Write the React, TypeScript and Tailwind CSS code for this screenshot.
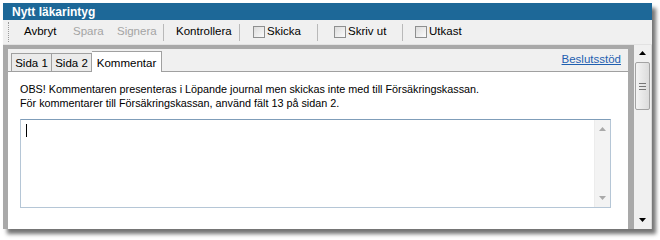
import React from "react";

// small helpers for the XP-ish chrome
function Check() {
  return (
    <span className="w-[12px] h-[12px] border border-[#8e8f8f] bg-gradient-to-br from-[#dcdcdc] to-[#fbfbfb] shrink-0" />
  );
}

function Sep() {
  return <span className="w-px h-[17px] bg-[#b9b9b9] shrink-0" />;
}

function Arrow({ up, color = "#000" }: { up?: boolean; color?: string }) {
  return (
    <svg width="7" height="4" viewBox="0 0 7 4">
      <path d={up ? "M0 4 L3.5 0 L7 4 Z" : "M0 0 L3.5 4 L7 0 Z"} fill={color} />
    </svg>
  );
}

export default function App() {
  return (
    <div className="w-[660px] h-[239px] bg-white font-['Liberation_Sans',Arial,sans-serif] text-black overflow-hidden">
      <div className="ml-[3px] mt-[3px] w-[649px] h-[226px] flex flex-col bg-[#f0f0f0] shadow-[4px_5px_4px_rgba(0,0,0,0.55)]">
        {/* --- title bar --- */}
        <div className="h-[17px] bg-[#1d6898] text-white font-bold text-[12px] pl-[9px] flex items-center">
          Nytt läkarintyg
        </div>

        {/* --- toolbar --- */}
        <div className="h-[25px] flex items-center text-[11.5px] border-b border-[#e2e2e2]">
          <span className="ml-[5px] h-[20px] border-l border-dotted border-[#9a9a9a]" />
          <span className="ml-[15px] w-[49px]">Avbryt</span>
          <span className="w-[44px] text-[#a4a4a4]">Spara</span>
          <span className="w-[46px] text-[#a4a4a4]">Signera</span>
          <Sep />
          <span className="ml-[12px] w-[63px]">Kontrollera</span>
          <Sep />
          <span className="ml-[13px] flex items-center gap-[2px] w-[64px]">
            <Check />
            Skicka
          </span>
          <Sep />
          <span className="ml-[16px] flex items-center gap-[2px] w-[68px]">
            <Check />
            Skriv ut
          </span>
          <Sep />
          <span className="ml-[12px] flex items-center gap-[2px]">
            <Check />
            Utkast
          </span>
        </div>

        {/* --- body --- */}
        <div className="flex-1 flex min-h-0">
          <div className="flex-1 bg-[#a9a9a9] pl-[5px] pt-[4px] pr-[6px] flex flex-col">
            <div className="flex-1 flex flex-col bg-[#f0f0f0]">
              {/* tabs */}
              <div className="h-[22px] flex items-end pl-[3px] text-[11.5px]">
                <div className="w-[41px] h-[18px] border border-b-0 border-[#a0a0a0] bg-[#ebebeb] flex items-center justify-center pt-[2px]">
                  Sida 1
                </div>
                <div className="w-[40px] h-[18px] border border-l-0 border-b-0 border-[#a0a0a0] bg-[#ebebeb] flex items-center justify-center pt-[2px]">
                  Sida 2
                </div>
                <div className="w-[70px] h-[21px] border-t border-r border-[#a0a0a0] bg-white -mb-px relative z-10 flex items-start justify-center pt-[3px]">
                  Kommentar
                </div>
                <a className="ml-auto mr-[7px] mb-[3px] text-[#1f5fb0] underline">Beslutsstöd</a>
              </div>

              {/* panel */}
              <div className="flex-1 bg-white border-t border-[#a0a0a0] pl-[12px] pt-[10px] text-[10.8px] leading-[14px]">
                <p>OBS! Kommentaren presenteras i Löpande journal men skickas inte med till Försäkringskassan.</p>
                <p>För kommentarer till Försäkringskassan, använd fält 13 på sidan 2.</p>

                <div className="mt-[9px] w-[591px] h-[89px] border border-[#b5c6d6] border-t-[#7f9db9] flex">
                  <div className="flex-1 pl-[5px] pt-[4px]">
                    <span className="block w-px h-[13px] bg-black" />
                  </div>
                  <div className="w-[16px] bg-[#f3f3f3] border-l border-[#ececec] flex flex-col items-center justify-between py-[7px]">
                    <Arrow up color="#a9a9a9" />
                    <Arrow color="#a9a9a9" />
                  </div>
                </div>
              </div>
            </div>
          </div>

          {/* outer scrollbar */}
          <div className="w-[18px] bg-[#f0f0f0] border-r border-[#d8d8d8] flex flex-col items-center pt-[6px] pb-[7px]">
            <Arrow up />
            <div className="mt-[7px] w-[15px] h-[48px] rounded-[2px] border border-[#a3a3a3] bg-gradient-to-r from-[#f3f3f3] to-[#dcdcdc] flex flex-col items-center justify-center gap-[2px]">
              <span className="w-[7px] h-px bg-[#777]" />
              <span className="w-[7px] h-px bg-[#777]" />
              <span className="w-[7px] h-px bg-[#777]" />
            </div>
            <div className="flex-1" />
            <Arrow />
          </div>
        </div>
      </div>
    </div>
  );
}
